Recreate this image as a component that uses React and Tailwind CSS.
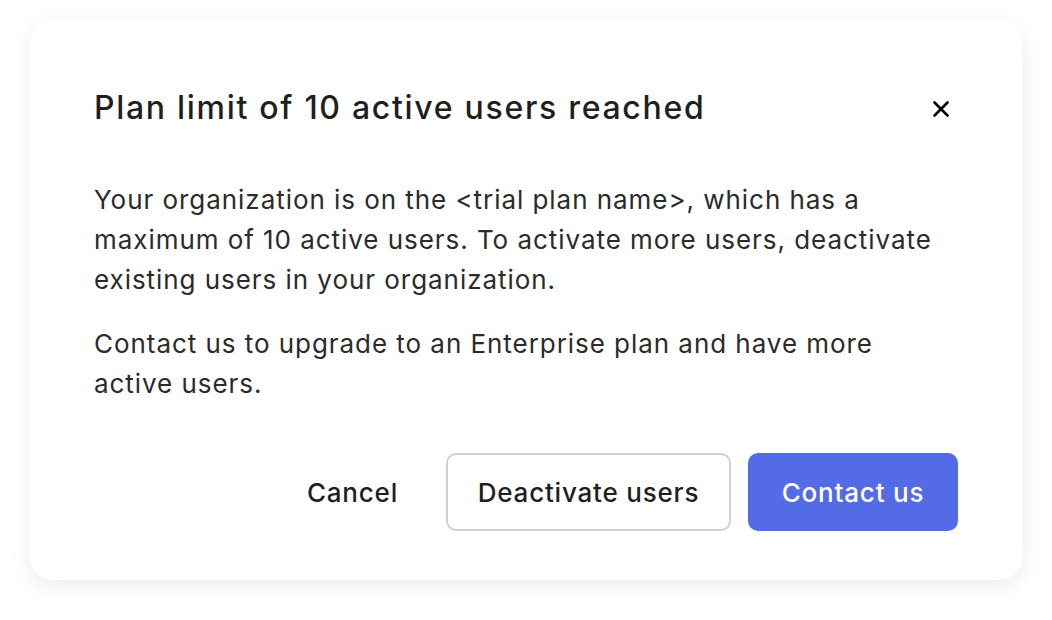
import React from 'react';
import { X } from 'lucide-react';

export default function App() {
  return (
    <div className="w-[1052px] h-[620px] bg-white pt-[20px] px-[30px]" style={{ fontFamily: 'Inter, "Noto Sans", sans-serif' }}>
      <div className="w-[992px] h-[560px] bg-white rounded-[22px] shadow-[0_6px_24px_rgba(0,0,0,0.08)] px-[64px] pt-[66px] flex flex-col">
        {/* Header */}
        <div className="flex items-center justify-between h-[44px]">
          <h2 className="text-[32px] leading-[44px] font-medium text-[#1f1f1f] tracking-[1.7px]">
            Plan limit of 10 active users reached
          </h2>
          <button className="w-[36px] h-[36px] flex items-center justify-center mr-[-1px] mt-[2px]">
            <X className="w-[26px] h-[26px] text-black" strokeWidth={2.4} />
          </button>
        </div>

        {/* Body */}
        <div className="mt-[50px] text-[26px] leading-[40px] text-[#2b2b2b] tracking-[0.95px]">
          <p>
            Your organization is on the &lt;trial plan name&gt;, which has a maximum of 10 active users. To activate more users, deactivate existing users in your organization.
          </p>
          <p className="mt-[24px]">
            Contact us to upgrade to an Enterprise plan and have more active users.
          </p>
        </div>

        {/* Actions */}
        <div className="mt-[49px] flex items-center justify-end gap-[17px] tracking-[0.8px]">
          <button className="h-[78px] px-[31px] text-[26px] font-medium text-[#1f1f1f]">
            Cancel
          </button>
          <button className="h-[78px] w-[285px] rounded-[10px] border-2 border-[#d0d0d0] text-[26px] font-medium text-[#1f1f1f]">
            Deactivate users
          </button>
          <button className="h-[78px] w-[210px] rounded-[10px] bg-[#546be6] text-[26px] font-medium text-white">
            Contact us
          </button>
        </div>
      </div>
    </div>
  );
}
